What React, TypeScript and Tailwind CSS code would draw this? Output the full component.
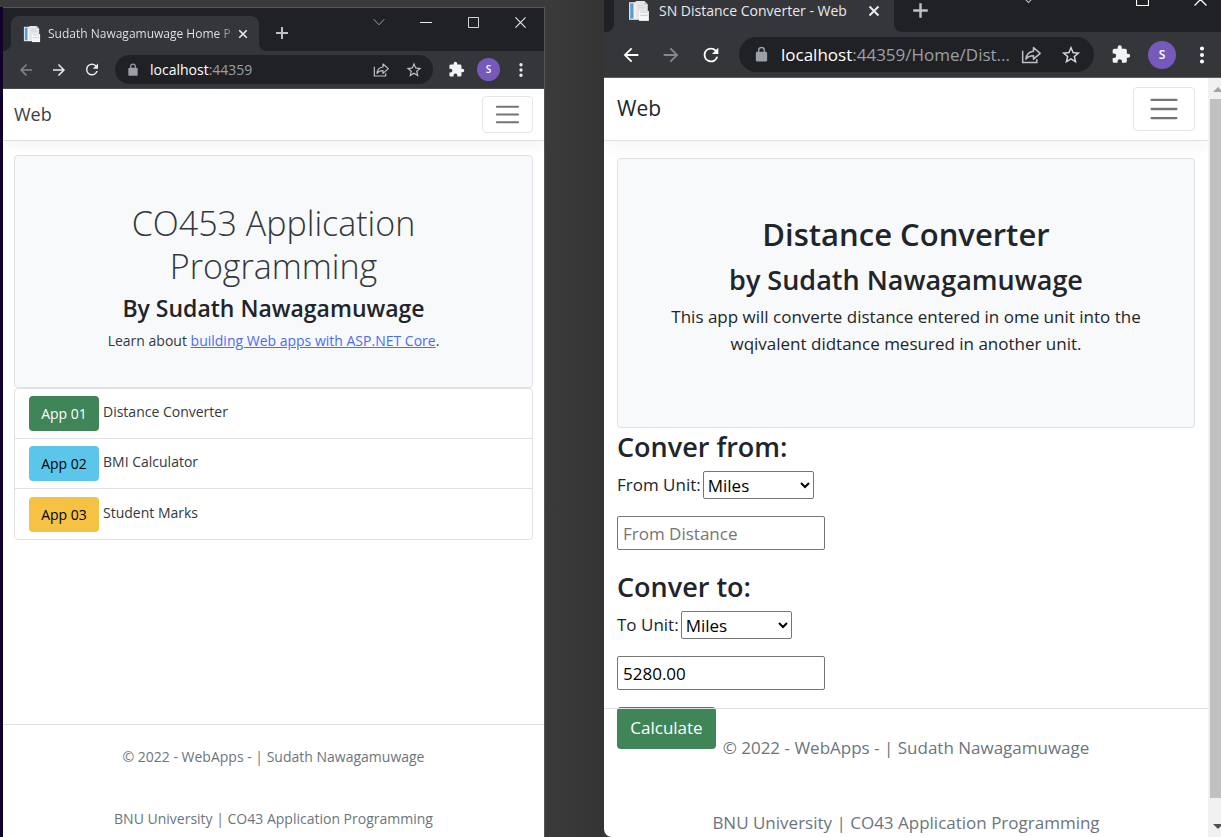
import type { ReactNode } from "react";

type IconProps = { className?: string };

const Arrow = ({ className }: IconProps) => (
  <svg viewBox="0 0 24 24" className={className} fill="currentColor" aria-hidden="true">
    <path d="M20 11H7.83l5.59-5.59L12 4l-8 8 8 8 1.41-1.41L7.83 13H20v-2z" />
  </svg>
);

const Reload = ({ className }: IconProps) => (
  <svg viewBox="0 0 24 24" className={className} fill="currentColor" aria-hidden="true">
    <path d="M17.65 6.35A7.96 7.96 0 0 0 12 4a8 8 0 1 0 7.73 10h-2.08A6 6 0 1 1 12 6c1.66 0 3.14.69 4.22 1.78L13 11h7V4l-2.35 2.35z" />
  </svg>
);

const Lock = ({ className }: IconProps) => (
  <svg viewBox="0 0 24 24" className={className} fill="currentColor" aria-hidden="true">
    <path d="M18 8h-1V6A5 5 0 0 0 7 6v2H6a2 2 0 0 0-2 2v10c0 1.1.9 2 2 2h12a2 2 0 0 0 2-2V10a2 2 0 0 0-2-2zM9 6a3 3 0 1 1 6 0v2H9V6z" />
  </svg>
);

const Share = ({ className }: IconProps) => (
  <svg viewBox="0 0 24 24" className={className} fill="none" stroke="currentColor" strokeWidth="1.8" aria-hidden="true">
    <path d="M2 7v14h17v-4" />
    <path d="M15 3l8 7-8 7v-4c-4 0-7 1-9 4 .5-5.500 4-9 9-9.500V3z" strokeLinejoin="round" />
  </svg>
);

const Star = ({ className }: IconProps) => (
  <svg viewBox="0 0 24 24" className={className} fill="currentColor" aria-hidden="true">
    <path d="M22 9.24l-7.19-.62L12 2 9.19 8.63 2 9.24l5.46 4.73L5.82 21 12 17.27 18.18 21l-1.63-7.03L22 9.24zM12 15.4l-3.76 2.27 1-4.28-3.32-2.88 4.38-.38L12 6.1l1.71 4.04 4.38.38-3.32 2.88 1 4.28L12 15.4z" />
  </svg>
);

const Puzzle = ({ className }: IconProps) => (
  <svg viewBox="0 0 24 24" className={className} fill="currentColor" aria-hidden="true">
    <path d="M20.5 11H19V7a2 2 0 0 0-2-2h-4V3.5a2.5 2.5 0 0 0-5 0V5H4a2 2 0 0 0-2 2v3.8h1.5a2.7 2.7 0 0 1 0 5.4H2V20c0 1.1.9 2 2 2h3.8v-1.5a2.7 2.7 0 0 1 5.4 0V22H17a2 2 0 0 0 2-2v-4h1.5a2.5 2.5 0 0 0 0-5z" />
  </svg>
);

const Dots = ({ className }: IconProps) => (
  <svg viewBox="0 0 24 24" className={className} fill="currentColor" aria-hidden="true">
    <circle cx="12" cy="5" r="2.2" />
    <circle cx="12" cy="12" r="2.2" />
    <circle cx="12" cy="19" r="2.2" />
  </svg>
);

const Cross = ({ className }: IconProps) => (
  <svg viewBox="0 0 12 12" className={className} fill="none" stroke="currentColor" aria-hidden="true">
    <path d="M1.5 1.5l9 9M10.5 1.5l-9 9" strokeWidth="2" />
  </svg>
);

const ThinCross = ({ className }: IconProps) => (
  <svg viewBox="0 0 12 12" className={className} fill="none" stroke="currentColor" aria-hidden="true">
    <path d="M.5.5l11 11M11.5.5l-11 11" strokeWidth="1.2" />
  </svg>
);

const Plus = ({ className }: IconProps) => (
  <svg viewBox="0 0 14 14" className={className} fill="none" stroke="currentColor" strokeWidth="2" aria-hidden="true">
    <path d="M7 1v12M1 7h12" />
  </svg>
);

const Chevron = ({ className }: IconProps) => (
  <svg viewBox="0 0 12 12" className={className} fill="none" stroke="currentColor" aria-hidden="true">
    <path d="M.7 3.2L6 8.8l5.3-5.6" />
  </svg>
);

const Minimise = ({ className }: IconProps) => (
  <svg viewBox="0 0 12 12" className={className} fill="none" stroke="currentColor" aria-hidden="true">
    <path d="M0 6.5h12" />
  </svg>
);

const Square = ({ className }: IconProps) => (
  <svg viewBox="0 0 12 12" className={className} fill="none" stroke="currentColor" aria-hidden="true">
    <path d="M.5.5h11v11H.5z" />
  </svg>
);

const Burger = ({ className }: IconProps) => (
  <svg viewBox="0 0 30 30" className={className} fill="none" stroke="#757575" strokeWidth="2" strokeLinecap="round" aria-hidden="true">
    <path d="M4 7h22M4 15h22M4 23h22" />
  </svg>
);

const Favicon = ({ className }: IconProps) => (
  <svg viewBox="0 0 20 20" className={className} aria-hidden="true">
    <path d="M1 2h9v16H1z" fill="#f3f3f3" />
    <path d="M2 3h3v14H2z" fill="#5b9bd0" />
    <path d="M7 1h8l3 3v13H7z" fill="#e4e6e8" />
    <path d="M15 1v3h3z" fill="#b9bdc1" />
    <path d="M9 5h5M9 7h7" stroke="#d3d6d9" />
    <path d="M10 10h9v9h-9z" fill="#f5f6f7" />
    <path d="M11 14h7M11 11h7" stroke="#cdd2d6" />
  </svg>
);

const IconButton = ({ label, className, children }: { label: string; className: string; children: ReactNode }) => (
  <button type="button" aria-label={label} className={`flex shrink-0 items-center justify-center ${className}`}>
    {children}
  </button>
);

const TabFlare = ({ side }: { side: "left" | "right" }) => (
  <div className="size-2 shrink-0 self-end bg-[#35363a]">
    <div className={`size-2 bg-[#202124] ${side === "left" ? "rounded-br-lg" : "rounded-bl-lg"}`} />
  </div>
);

const apps = [
  { button: "App 01", name: "Distance Converter", color: "bg-[#408558] text-white" },
  { button: "App 02", name: "BMI Calculator", color: "bg-[#5bc6ea] text-black" },
  { button: "App 03", name: "Student Marks", color: "bg-[#f5c243] text-black" },
];

function HomeWindow() {
  return (
    <section className="mt-[7px] flex min-w-0 flex-col border-t border-r border-[#55565a] bg-white">
      <div className="flex h-[43px] items-end bg-[#202124]">
        <TabFlare side="left" />
        <div className="flex h-[35px] w-[248px] items-center rounded-t-lg bg-[#35363a] pr-2 pl-3 text-[#e8eaed]">
          <Favicon className="size-[18px] shrink-0" />
          <span className="ml-[7px] flex-1 bg-linear-to-r from-[#e8eaed] from-90% to-[#5f6165] bg-clip-text text-[12px] whitespace-nowrap text-transparent">
            Sudath Nawagamuwage Home P
          </span>
          <IconButton label="Close tab" className="size-4">
            <Cross className="size-[10px]" />
          </IconButton>
        </div>
        <TabFlare side="right" />
        <IconButton label="New tab" className="mb-2.5 ml-[7px] size-4 text-[#bdc1c6]">
          <Plus className="size-[14px]" />
        </IconButton>
        <div className="mb-[23px] ml-auto flex items-center gap-[35px] pr-[18px] text-[#e8eaed]">
          <IconButton label="Search tabs" className="size-3 text-[#9aa0a6]">
            <Chevron className="size-3" />
          </IconButton>
          <IconButton label="Minimise" className="size-3">
            <Minimise className="size-3" />
          </IconButton>
          <IconButton label="Maximise" className="size-3">
            <Square className="size-[11px]" />
          </IconButton>
          <IconButton label="Close window" className="size-3">
            <ThinCross className="size-[11px]" />
          </IconButton>
        </div>
      </div>
      <div className="flex h-[38px] items-center border-b border-[#4b4c50] bg-[#35363a] px-3.5">
        <div className="flex gap-[15px] text-[#e8eaed]">
          <IconButton label="Back" className="size-[18px] text-[#85878b]">
            <Arrow className="size-[20px]" />
          </IconButton>
          <IconButton label="Forward" className="size-[18px]">
            <Arrow className="size-[20px] rotate-180" />
          </IconButton>
          <IconButton label="Reload" className="size-[18px]">
            <Reload className="size-[21px]" />
          </IconButton>
        </div>
        <div className="ml-3.5 flex h-[29px] min-w-0 flex-1 items-center rounded-full bg-[#202124] pr-[10px] pl-[11px] text-[#9aa0a6]">
          <Lock className="size-[14px] shrink-0" />
          <span className="ml-2.5 flex-1 text-[14px]">
            <span className="text-white">localhost</span>:44359
          </span>
          <IconButton label="Share" className="size-4 text-[#bdc1c6]">
            <Share className="size-4" />
          </IconButton>
          <IconButton label="Bookmark" className="ml-4 size-[18px] text-[#bdc1c6]">
            <Star className="size-[18px]" />
          </IconButton>
        </div>
        <IconButton label="Extensions" className="ml-3.5 size-[18px] text-[#f1f3f4]">
          <Puzzle className="size-[17px]" />
        </IconButton>
        <IconButton label="Profile" className="ml-3 size-[23px] rounded-full bg-[#7759bb] text-[10px] font-semibold text-white">
          S
        </IconButton>
        <IconButton label="Menu" className="ml-3 size-[18px] text-[#e8eaed]">
          <Dots className="size-[18px]" />
        </IconButton>
      </div>
      <header className="flex h-[52px] items-center justify-between border-b border-[#dee2e6] px-[11px] shadow-[0_6px_11px_rgba(0,0,0,0.04)]">
        <a href="#home" className="text-[18px] text-[#3a3f44]">Web</a>
        <button type="button" aria-label="Toggle navigation" className="flex h-[37px] w-[51px] items-center justify-center rounded border border-[#e3e5e7]">
          <Burger className="size-[29px]" />
        </button>
      </header>
      <main className="flex-1 px-[11px] pt-3.5 text-[14px] text-[#33383d]">
        <div className="h-[233px] rounded border border-[#dee2e6] bg-[#f8f9fb] px-14 pt-[46px] text-center">
          <h1 className="mx-auto max-w-[340px] text-[34px] leading-[43px] font-light">CO453 Application Programming</h1>
          <h2 className="text-[23px] leading-[40px] font-semibold text-[#212529]">By Sudath Nawagamuwage</h2>
          <p className="leading-[25px]">
            Learn about{" "}
            <a href="#learn" className="text-[#4a6cf7] underline">building Web apps with ASP.NET Core</a>.
          </p>
        </div>
        <ul className="divide-y divide-[#dee2e6] rounded border border-[#dee2e6]">
          {apps.map((app) => (
            <li key={app.name} className="flex h-[50px] items-center gap-1 px-3.5">
              <button type="button" className={`h-[35px] w-[70px] rounded text-[14px] ${app.color}`}>{app.button}</button>
              <span className="pb-1">{app.name}</span>
            </li>
          ))}
        </ul>
      </main>
      <footer className="flex h-[113px] flex-col gap-[37px] border-t border-[#dee2e6] pt-[19px] text-center text-[14px] leading-[25px] text-[#6c757d]">
        <p>© 2022 - WebApps - | Sudath Nawagamuwage</p>
        <p>BNU University | CO43 Application Programming</p>
      </footer>
    </section>
  );
}

const UnitSelect = ({ id }: { id: string }) => (
  <select id={id} defaultValue="Miles" className="ml-0.5 h-[28px] w-[111px] rounded-xs border border-[#767676] bg-white text-[17px] text-black">
    <option>Miles</option>
    <option>Feet</option>
    <option>Metres</option>
  </select>
);

function ConverterWindow() {
  return (
    <section className="flex min-w-0 flex-col overflow-hidden rounded-bl-lg bg-white">
      <div className="flex h-8 items-end bg-[#202124] pl-0.5">
        <TabFlare side="left" />
        <div className="flex h-8 w-[280px] items-center bg-[#35363a] pr-3 pb-[11px] pl-3.5 text-[#e8eaed]">
          <Favicon className="size-[22px] shrink-0" />
          <span className="ml-[9px] min-w-0 flex-1 text-[14px] leading-[21px] whitespace-nowrap">SN Distance Converter - Web</span>
          <IconButton label="Close tab" className="size-4">
            <Cross className="size-[12px]" />
          </IconButton>
        </div>
        <TabFlare side="right" />
        <div className="flex h-8 flex-1 items-center pb-[11px] pl-[9px] text-[#bdc1c6]">
          <IconButton label="New tab" className="size-[18px]">
            <Plus className="size-[17px]" />
          </IconButton>
        </div>
        <div className="flex h-8 items-start gap-[44px] overflow-hidden pr-[14px] text-white">
          <IconButton label="Search tabs" className="-mt-2 mr-[56px] size-[14px] text-[#bdc1c6]">
            <Chevron className="size-[13px]" />
          </IconButton>
          <IconButton label="Maximise" className="-mt-2 size-[14px]">
            <Square className="size-[13px]" />
          </IconButton>
          <IconButton label="Close window" className="-mt-2 size-[14px]">
            <ThinCross className="size-[13px]" />
          </IconButton>
        </div>
      </div>
      <div className="flex h-[46px] items-center border-b border-[#5f6063] bg-[#35363a] pr-2 pl-4">
        <div className="flex gap-[18px] text-white">
          <IconButton label="Back" className="size-[22px]">
            <Arrow className="size-[24px]" />
          </IconButton>
          <IconButton label="Forward" className="size-[22px] text-[#85878b]">
            <Arrow className="size-[24px] rotate-180" />
          </IconButton>
          <IconButton label="Reload" className="size-[22px]">
            <Reload className="size-[26px]" />
          </IconButton>
        </div>
        <div className="ml-[17px] flex h-[35px] min-w-0 flex-1 items-center rounded-full bg-[#202124] pr-3 pl-3.5 text-[#9aa0a6]">
          <Lock className="size-[17px] shrink-0" />
          <span className="ml-[11px] min-w-0 flex-1 text-[17px] whitespace-nowrap">
            <span className="text-white">localhost</span>:44359/Home/Dist...
          </span>
          <IconButton label="Share" className="size-5 text-[#bdc1c6]">
            <Share className="size-5" />
          </IconButton>
          <IconButton label="Bookmark" className="ml-[19px] size-[22px] text-[#d5d7da]">
            <Star className="size-[22px]" />
          </IconButton>
        </div>
        <IconButton label="Extensions" className="ml-[17px] size-5 text-[#f1f3f4]">
          <Puzzle className="size-[21px]" />
        </IconButton>
        <IconButton label="Profile" className="ml-[17px] size-7 rounded-full bg-[#7759bb] text-[12px] font-semibold text-white">
          S
        </IconButton>
        <IconButton label="Menu" className="ml-[15px] size-[22px] text-white">
          <Dots className="size-[22px]" />
        </IconButton>
      </div>
      <div className="flex min-h-0 flex-1">
        <div className="flex min-w-0 flex-1 flex-col">
          <header className="flex h-[63px] shrink-0 items-center justify-between border-b border-[#dee2e6] px-[13px] shadow-[0_6px_13px_rgba(0,0,0,0.04)]">
            <a href="#web" className="text-[21px] text-[#212529]">Web</a>
            <button type="button" aria-label="Toggle navigation" className="flex h-[44px] w-[62px] items-center justify-center rounded border border-[#e3e5e7]">
              <Burger className="size-[34px]" />
            </button>
          </header>
          <main className="min-h-0 flex-1 px-[13px] pt-[17px] text-[17px] text-[#212529]">
            <div className="h-[270px] rounded border border-[#dee2e6] bg-[#f8f9fb] px-10 pt-[52px] text-center">
              <h1 className="text-[31px] leading-[46px] font-semibold">Distance Converter</h1>
              <h2 className="text-[27px] leading-[46px] font-semibold">by Sudath Nawagamuwage</h2>
              <p className="leading-[27px]">
                This app will converte distance entered in ome unit into the wqivalent didtance mesured in another unit.
              </p>
            </div>
            <form>
              <h2 className="text-[27px] leading-[38px] font-semibold">Conver from:</h2>
              <div className="mt-[5px] flex items-center">
                <label htmlFor="from-unit">From Unit:</label>
                <UnitSelect id="from-unit" />
              </div>
              <input aria-label="From distance" placeholder="From Distance" className="mt-[17px] block h-[34px] w-[208px] rounded-xs border border-[#767676] px-[5px] text-black placeholder:text-[#757575]" />
              <h2 className="mt-[18px] text-[27px] leading-[38px] font-semibold">Conver to:</h2>
              <div className="mt-[5px] flex items-center">
                <label htmlFor="to-unit">To Unit:</label>
                <UnitSelect id="to-unit" />
              </div>
              <input aria-label="To distance" defaultValue="5280.00" className="mt-[17px] block h-[34px] w-[208px] rounded-xs border border-[#767676] px-[5px] text-black" />
              <button type="button" className="mt-[17px] h-[42px] w-[99px] rounded bg-[#408558] text-white">Calculate</button>
            </form>
          </main>
          <footer className="flex h-[129px] shrink-0 flex-col gap-12 border-t border-[#dee2e6] pt-[25px] text-center text-[17px] leading-[27px] text-[#6c757d]">
            <p>© 2022 - WebApps - | Sudath Nawagamuwage</p>
            <p>BNU University | CO43 Application Programming</p>
          </footer>
        </div>
        <div className="flex w-[13px] shrink-0 flex-col overflow-hidden bg-[#f1f1f1] pl-0.5">
          <svg viewBox="0 0 11 21" className="h-[21px] w-[11px] shrink-0" aria-hidden="true">
            <path d="M3 14l5-5 5 5z" fill="#a3a3a3" />
          </svg>
          <div className="flex-1 bg-[#c1c1c1]" />
          <svg viewBox="0 0 11 39" className="h-[39px] w-[11px] shrink-0" aria-hidden="true">
            <path d="M3 26h10l-5 5z" fill="#505050" />
          </svg>
        </div>
      </div>
    </section>
  );
}

export default function App() {
  return (
    <div className="grid h-screen grid-cols-[3px_542fr_59px_617fr] grid-rows-1 overflow-hidden bg-[#3a3a3a] font-['Open_Sans','Noto_Sans',sans-serif]">
      <div className="mt-[7px] bg-[#10002b]" />
      <HomeWindow />
      <div className="bg-linear-to-r from-[#3b3b3b] to-[#343434]" />
      <ConverterWindow />
    </div>
  );
}
